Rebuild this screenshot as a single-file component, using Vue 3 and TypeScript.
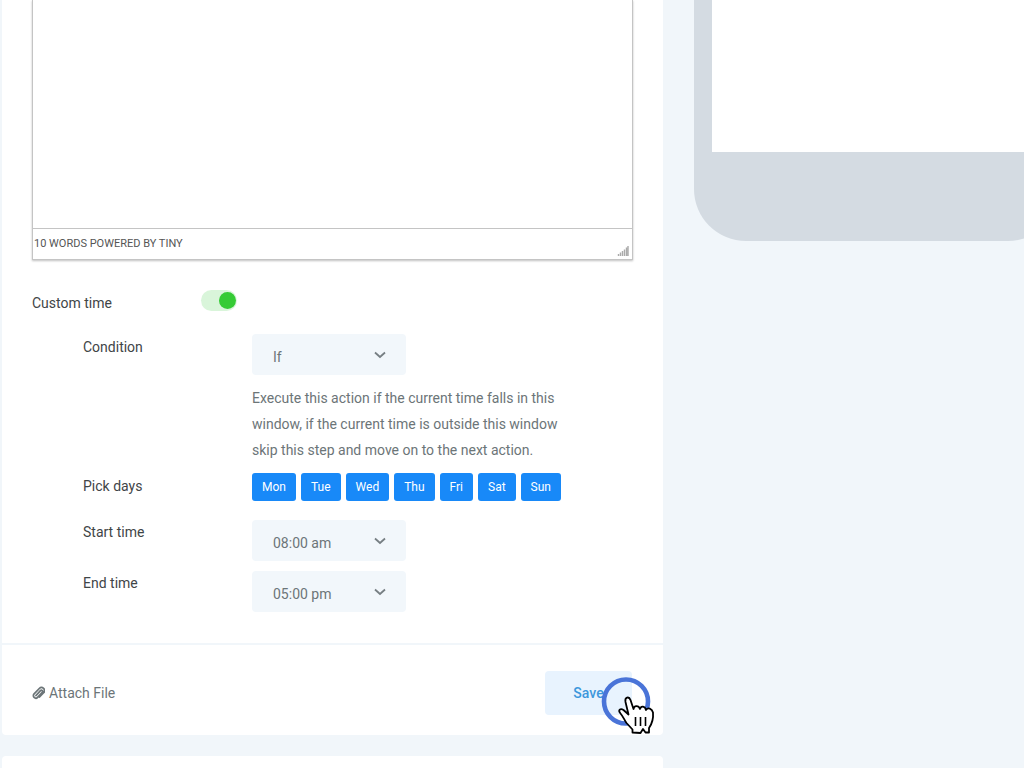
<script setup lang="ts">
import { ref } from 'vue'

interface TimeField {
  id: string
  label: string
  value: string
  options: string[]
}

const message = ref('')
const customTime = ref(true)
const condition = ref('If')
const days = ref(['Mon', 'Tue', 'Wed', 'Thu', 'Fri', 'Sat', 'Sun'].map((name) => ({ name, on: true })))
const times = ref<TimeField[]>([
  { id: 'start', label: 'Start time', value: '08:00 am', options: ['08:00 am', '09:00 am', '10:00 am'] },
  { id: 'end', label: 'End time', value: '05:00 pm', options: ['04:00 pm', '05:00 pm', '06:00 pm'] },
])
</script>

<template>
  <main class="page">
    <section class="column">
      <form class="card" @submit.prevent>
        <div class="body">
          <div class="editor">
            <textarea v-model="message" class="editor-text" aria-label="Message"></textarea>
            <div class="editor-status">
              <span>10 WORDS POWERED BY TINY</span>
              <svg class="grip" width="12" height="12" viewBox="0 0 12 12" aria-hidden="true">
                <path d="M1.5 9v2M3.500 7.500v3.500M5.500 6v5M7.500 4.500v6.500M9.500 2.500v8.500M11 1v10" stroke="#aaa" stroke-width="1.400" />
              </svg>
            </div>
          </div>

          <div class="row toggle-row">
            <label class="label" for="custom-time">Custom time</label>
            <input id="custom-time" v-model="customTime" class="switch" type="checkbox" role="switch" />
          </div>

          <div class="nested">
            <div class="row condition-row">
              <label class="label" for="condition">Condition</label>
              <div class="field">
                <div class="select-wrap">
                  <select id="condition" v-model="condition" class="select">
                    <option>If</option>
                    <option>Wait</option>
                  </select>
                  <svg class="chevron" width="12" height="8" viewBox="0 0 12 8" aria-hidden="true"><path d="M1 1.500l5 4.500 5-4.500" /></svg>
                </div>
                <p class="help">
                  Execute this action if the current time falls in this window, if the current time is outside this window
                  skip this step and move on to the next action.
                </p>
              </div>
            </div>
            <div class="row days-row">
              <span id="days-label" class="label">Pick days</span>
              <div class="days" role="group" aria-labelledby="days-label">
                <button v-for="day in days" :key="day.name" type="button" class="day" :class="{ off: !day.on }" :aria-pressed="day.on" @click="day.on = !day.on">
                  {{ day.name }}
                </button>
              </div>
            </div>
            <div v-for="time in times" :key="time.id" class="row time-row">
              <label class="label" :for="time.id">{{ time.label }}</label>
              <div class="select-wrap">
                <select :id="time.id" v-model="time.value" class="select">
                  <option v-for="option in time.options" :key="option">{{ option }}</option>
                </select>
                <svg class="chevron" width="12" height="8" viewBox="0 0 12 8" aria-hidden="true"><path d="M1 1.500l5 4.500 5-4.500" /></svg>
              </div>
            </div>
          </div>
        </div>

        <footer class="footer">
          <button type="button" class="attach">
            <svg width="13" height="14" viewBox="0 0 13 14" aria-hidden="true">
              <path d="M4 9.500L8.500 4.700a1.200 1.200 0 0 1 1.800 1.700L5.600 11.300a2.400 2.400 0 0 1-3.500-3.400L7.300 2.500a3 3 0 0 1 4.300 4.200L7.500 11" fill="none" stroke="currentColor" stroke-width="1.800" stroke-linecap="round" />
            </svg>
            Attach File
          </button>
          <div class="save-wrap">
            <button type="submit" class="save">Save</button>
            <svg class="pointer" width="56" height="62" viewBox="0 0 56 62" aria-hidden="true">
              <circle cx="27" cy="26.500" r="22" fill="none" stroke="#4a74d8" stroke-width="4.600" />
              <path d="M33.500 57.500V54.500L27.500 48C25 44.500 24.500 42 21.500 38.500C18.500 35 21.500 33 24.500 35L29.500 39.500L26.500 27C25.500 22 30 21 31.500 25L34.500 34C35 30.500 39.500 30 41 34C42 30.500 46 31 47 35C49 32 53 33.500 54 37.500C54.500 43 53.500 48 50 53V57.500H46.500L44 54L41.500 58Z" fill="#fff" stroke="#000" stroke-width="1.800" stroke-linejoin="round" />
              <path d="M36.500 42v9M41.500 42v9M46.500 42v9" stroke="#000" stroke-width="1.600" />
            </svg>
          </div>
        </footer>
      </form>
      <div class="card next-card"></div>
    </section>

    <aside class="preview">
      <div class="phone"><div class="screen"></div></div>
    </aside>
  </main>
</template>

<style>
body {
  margin: 0;
  background: #f1f6fa;
}
</style>

<style scoped>
.page {
  display: grid;
  grid-template-columns: minmax(0, 661fr) minmax(0, 330fr);
  column-gap: 31px;
  height: 100vh;
  padding-left: 2px;
  overflow: hidden;
  box-sizing: border-box;
  font: 14px/20px Roboto, "Liberation Sans", sans-serif;
  color: #3f4547;
}
.column {
  display: flex;
  flex-direction: column;
  gap: 21px;
}
.card {
  background: #fff;
  border-radius: 0 0 4px 4px;
}
.next-card {
  height: 80px;
  border-radius: 4px;
}
.body {
  padding: 0 30px 31px;
}
.editor {
  border: 1px solid #c4c4c4;
  border-top: 0;
  box-shadow: 0 1px 2px rgba(0, 0, 0, 0.25);
}
.editor-text {
  display: block;
  width: 100%;
  height: 228px;
  padding: 8px;
  border: 0;
  outline: 0;
  resize: none;
  box-sizing: border-box;
  background: #fff;
  font: inherit;
}
.editor-status {
  display: flex;
  justify-content: space-between;
  align-items: center;
  height: 30px;
  padding: 0 3px 0 1px;
  border-top: 1px solid #c4c4c4;
  font-size: 11px;
  color: #555;
}
.grip {
  align-self: flex-end;
  margin-bottom: 2px;
}
.row {
  display: flex;
  align-items: flex-start;
}
.label {
  flex: 0 0 169px;
}
.toggle-row {
  margin-top: 30px;
}
.toggle-row .label {
  padding-top: 3px;
}
.switch {
  appearance: none;
  display: flex;
  align-items: center;
  width: 36px;
  height: 21px;
  margin: 0;
  padding: 0 1px;
  box-sizing: border-box;
  border-radius: 11px;
  background: #d9f5da;
}
.switch::before {
  content: "";
  width: 17px;
  height: 17px;
  border-radius: 50%;
  background: #aaa;
}
.switch:checked {
  justify-content: flex-end;
}
.switch:checked::before {
  background: #35cb35;
}
.nested {
  padding-left: 51px;
  margin-top: 21px;
}
.select-wrap {
  position: relative;
  width: 154px;
}
.select {
  appearance: none;
  display: block;
  width: 100%;
  height: 41px;
  padding: 4px 36px 0 21px;
  border: 0;
  border-radius: 4px;
  background: #f2f7fb;
  color: #6c7578;
  font: inherit;
}
.chevron {
  position: absolute;
  right: 20px;
  top: 17px;
  fill: none;
  stroke: #777f83;
  stroke-width: 1.800;
  pointer-events: none;
}
.field {
  flex: 0 1 320px;
}
.help {
  margin: 10px 0 0;
  line-height: 26px;
  color: #6c7578;
}
.condition-row .label,
.days-row .label {
  padding-top: 3px;
}
.time-row .label {
  padding-top: 2px;
}
.days-row {
  margin-top: 10px;
}
.days {
  display: flex;
  gap: 5px;
}
.day {
  height: 28px;
  padding: 0 10px;
  border: 0;
  border-radius: 3px;
  background: #1889f8;
  color: #fff;
  font: 12px Roboto, "Liberation Sans", sans-serif;
}
.day.off {
  background: #c5d0d8;
}
.time-row {
  margin-top: 10px;
}
.days-row + .time-row {
  margin-top: 19px;
}
.footer {
  display: flex;
  justify-content: space-between;
  align-items: center;
  padding: 26px 31px 20px 30px;
  border-top: 2px solid #f1f6fa;
}
.attach {
  display: flex;
  align-items: center;
  gap: 4px;
  padding: 0;
  border: 0;
  background: none;
  color: #6c7578;
  font: inherit;
}
.save-wrap {
  position: relative;
}
.save {
  display: block;
  width: 87px;
  height: 44px;
  border: 0;
  border-radius: 4px;
  background: #e8f3fe;
  color: #3d97dc;
  font: 500 14px Roboto, "Liberation Sans", sans-serif;
}
.pointer {
  position: absolute;
  left: 54px;
  top: 4px;
  pointer-events: none;
}
.phone {
  width: 366px;
  height: 241px;
  padding: 0 18px 89px;
  box-sizing: border-box;
  border-radius: 0 0 52px 52px;
  background: #d4dbe2;
}
.screen {
  height: 100%;
  background: #fff;
}
</style>
